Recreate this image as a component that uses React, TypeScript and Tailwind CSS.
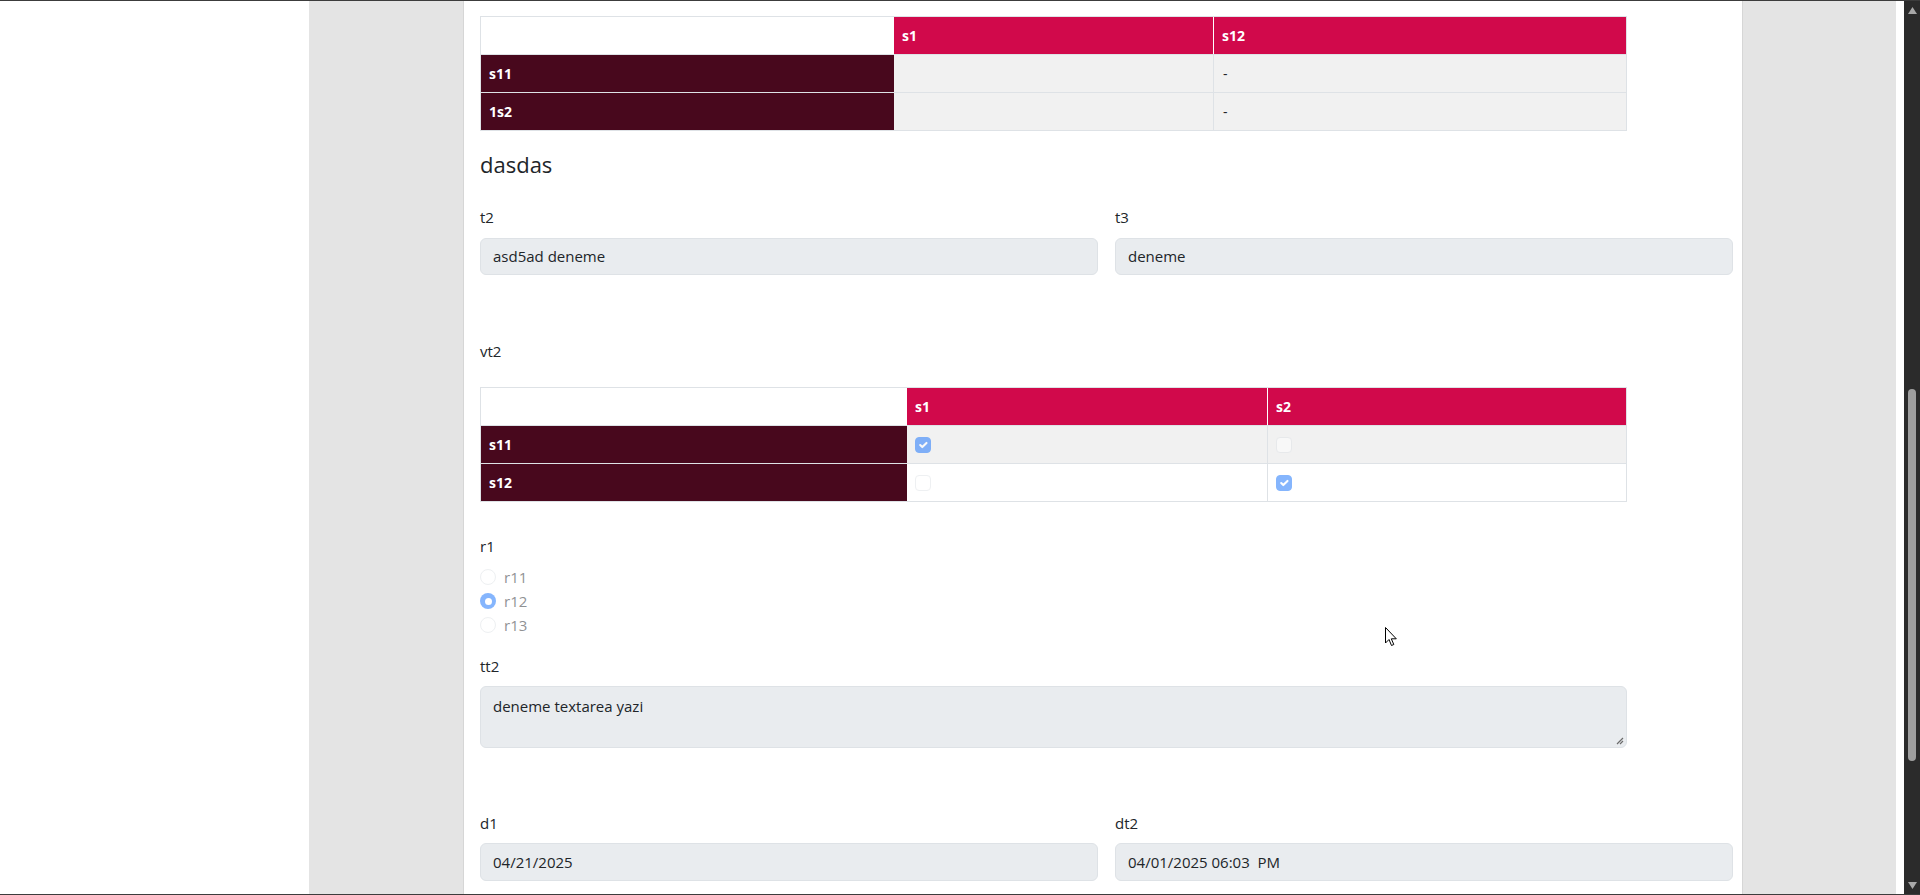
import React from "react";

function Check() {
  return (
    <svg viewBox="0 0 20 20" className="w-full h-full">
      <path fill="none" stroke="#fff" strokeLinecap="round" strokeLinejoin="round" strokeWidth="3" d="m6 10 3 3 6-6" />
    </svg>
  );
}

function CheckBox({ checked }: { checked: boolean }) {
  return checked ? (
    <div className="w-4 h-4 rounded-[4px] bg-[#0d6efd] border border-[#0d6efd] opacity-50 flex items-center justify-center">
      <Check />
    </div>
  ) : (
    <div className="w-4 h-4 rounded-[4px] bg-white border border-[#dee2e6] opacity-50" />
  );
}

function Radio({ checked, label }: { checked: boolean; label: string }) {
  return (
    <div className="h-[24px] flex items-center gap-2 opacity-50">
      {checked ? (
        <div className="w-4 h-4 rounded-full bg-[#0d6efd] flex items-center justify-center">
          <div className="w-[7px] h-[7px] rounded-full bg-white" />
        </div>
      ) : (
        <div className="w-4 h-4 rounded-full bg-white border border-[#dee2e6]" />
      )}
      <span className="text-[15px] leading-[22px] text-[#212529]">{label}</span>
    </div>
  );
}

function Label({ children, className = "" }: { children: React.ReactNode; className?: string }) {
  return <div className={"text-[15px] leading-[22px] text-[#212529] " + className}>{children}</div>;
}

function Input({ value, className = "" }: { value: string; className?: string }) {
  return (
    <div className={"h-[37px] rounded-[6px] border border-[#dee2e6] bg-[#e9ecef] px-[12px] flex items-center text-[15px] text-[#212529] " + className}>
      {value}
    </div>
  );
}

function Table1() {
  return (
    <div className="w-[1147px] border border-[#dee2e6] text-[14px]">
      <div className="grid grid-cols-[413px_319px_1fr] h-[37px]">
        <div className="bg-white" />
        <div className="bg-[#d1094b] text-white font-bold px-2 flex items-center">s1</div>
        <div className="bg-[#d1094b] text-white font-bold px-2 flex items-center border-l border-white">s12</div>
      </div>
      {["s11", "1s2"].map((r) => (
        <div key={r} className="grid grid-cols-[413px_319px_1fr] h-[38px] border-t border-[#dee2e6]">
          <div className="bg-[#48081d] text-white font-bold px-2 flex items-center">{r}</div>
          <div className="bg-[#f1f1f1]" />
          <div className="bg-[#f1f1f1] border-l border-[#dee2e6] px-[9px] flex items-center text-[#212529]">-</div>
        </div>
      ))}
    </div>
  );
}

function Table2() {
  const rows: [string, boolean, boolean, string][] = [
    ["s11", true, false, "bg-[#f1f1f1]"],
    ["s12", false, true, "bg-white"],
  ];
  return (
    <div className="w-[1147px] border border-[#dee2e6] text-[14px]">
      <div className="grid grid-cols-[426px_360px_1fr] h-[37px]">
        <div className="bg-white" />
        <div className="bg-[#d1094b] text-white font-bold px-2 flex items-center">s1</div>
        <div className="bg-[#d1094b] text-white font-bold px-2 flex items-center border-l border-white">s2</div>
      </div>
      {rows.map(([r, a, b, bg]) => (
        <div key={r} className="grid grid-cols-[426px_360px_1fr] h-[38px] border-t border-[#dee2e6]">
          <div className="bg-[#48081d] text-white font-bold px-2 flex items-center">{r}</div>
          <div className={bg + " px-2 flex items-center"}>
            <CheckBox checked={a} />
          </div>
          <div className={bg + " border-l border-[#dee2e6] px-2 flex items-center"}>
            <CheckBox checked={b} />
          </div>
        </div>
      ))}
    </div>
  );
}

export default function App() {
  return (
    <div className="relative w-[1920px] h-[895px] overflow-hidden bg-white flex flex-col font-['Open_Sans',sans-serif]">
      <div className="h-px bg-[#3c3c3c]" />
      <div className="h-[893px] flex">
        <div className="w-[309px] bg-white" />
        <div className="w-[154px] bg-[#e4e4e4]" />
        <div className="w-[1280px] border-x border-[#d6d6d6] bg-white pl-4 pt-[15px] flex flex-col">
          <Table1 />
          <div className="mt-[18px] text-[22px] leading-[30px] text-[#212529]">dasdas</div>
          <div className="mt-[27px] grid grid-cols-[618px_618px] gap-x-[17px]">
            <div>
              <Label>t2</Label>
              <Input value="asd5ad deneme" className="mt-[10px]" />
            </div>
            <div>
              <Label>t3</Label>
              <Input value="deneme" className="mt-[10px]" />
            </div>
          </div>
          <Label className="mt-[65px]">vt2</Label>
          <div className="mt-[25px]">
            <Table2 />
          </div>
          <Label className="mt-[33px]">r1</Label>
          <div className="mt-[8px] flex flex-col">
            <Radio checked={false} label="r11" />
            <Radio checked={true} label="r12" />
            <Radio checked={false} label="r13" />
          </div>
          <Label className="mt-[18px]">tt2</Label>
          <div className="relative mt-[9px] w-[1147px] h-[62px] rounded-[6px] border border-[#dee2e6] bg-[#e9ecef] px-[12px] pt-[8px] text-[15px] leading-[22px] text-[#212529]">
            deneme textarea yazi
            <svg className="absolute right-[2px] bottom-[2px]" width="8" height="8" viewBox="0 0 8 8">
              <path d="M1 7 L7 1 M4 7 L7 4" stroke="#6b6b6b" strokeWidth="1.2" />
            </svg>
          </div>
          <div className="mt-[64px] grid grid-cols-[618px_618px] gap-x-[17px]">
            <div>
              <Label>d1</Label>
              <Input value="04/21/2025" className="mt-[9px] h-[38px]" />
            </div>
            <div>
              <Label>dt2</Label>
              <Input value="04/01/2025 06:03  PM" className="mt-[9px] h-[38px] whitespace-pre" />
            </div>
          </div>
        </div>
        <div className="w-[153px] bg-[#e4e4e4]" />
        <div className="w-[8px] bg-white" />
        <div className="w-[16px] bg-[#2b2b2b] flex flex-col items-center">
          <svg className="mt-[6px]" width="9" height="7" viewBox="0 0 9 7">
            <path d="M4.5 0 L9 7 L0 7 Z" fill="#a8a8a8" />
          </svg>
          <div className="mt-[375px] w-[8px] h-[372px] rounded-full bg-[#9f9f9f]" />
          <div className="flex-1" />
          <svg className="mb-[5px]" width="9" height="7" viewBox="0 0 9 7">
            <path d="M0 0 L9 0 L4.5 7 Z" fill="#a8a8a8" />
          </svg>
        </div>
      </div>
      <div className="h-px bg-[#3c3c3c]" />
      <svg className="absolute left-[1385px] top-[627px]" width="13" height="20" viewBox="0 0 13 20">
        <path d="M0.5 0.5 L0.5 16 L4 12.5 L6.5 18.5 L8.8 17.5 L6.3 11.8 L11.3 11.8 Z" fill="#fff" stroke="#000" strokeWidth="1" strokeLinejoin="round" />
      </svg>
    </div>
  );
}
